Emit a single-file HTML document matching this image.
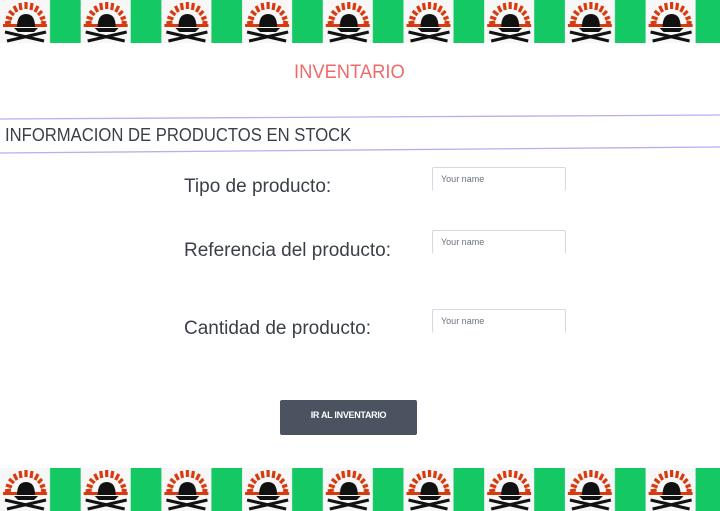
<!DOCTYPE html>
<html><head><meta charset="utf-8">
<style>
body{margin:0;width:720px;height:511px;background:#fff;position:relative;overflow:hidden;font-family:"Liberation Sans",sans-serif;}
.band{position:absolute;left:0;width:720px;height:43px}
.t{position:absolute;white-space:nowrap}
.lbl{font-size:19px;color:#3a3f48;left:184px}
.inp{position:absolute;left:432px;width:134px;height:24px;border:1px solid #d6d9e0;border-bottom:none;border-radius:2px;font-size:9px;color:#6b7280;box-sizing:border-box;padding:6px 0 0 8px}
</style></head><body>
<svg width="0" height="0" style="position:absolute">
<defs>
<pattern id="p" x="0" y="0" width="80.7" height="43" patternUnits="userSpaceOnUse">
<rect width="50" height="43" fill="#f7f7f7"/>
<rect x="50" width="30.7" height="43" fill="#14c964"/>
<g stroke="#d63a0e" stroke-width="3.2">
<line x1="5" y1="23" x2="11" y2="22"/><line x1="6" y1="17" x2="12" y2="19"/>
<line x1="9" y1="11" x2="14" y2="15"/><line x1="14" y1="6" x2="17" y2="12"/>
<line x1="20" y1="3" x2="21" y2="10"/><line x1="26" y1="2" x2="26" y2="9"/>
<line x1="32" y1="3" x2="31" y2="10"/><line x1="38" y1="6" x2="35" y2="12"/>
<line x1="42" y1="11" x2="38" y2="15"/><line x1="45" y1="17" x2="40" y2="19"/>
<line x1="46" y1="23" x2="41" y2="22"/>
</g>
<rect x="3" y="24" width="44" height="3" fill="#d63a0e"/>
<path d="M17 27 Q17 14 26 14 Q35 14 35 27 Z" fill="#111"/>
<path d="M14 28 L38 28 L34 32 L18 32 Z" fill="#111"/>
<g stroke="#111" stroke-width="3">
<line x1="5" y1="32" x2="44" y2="41"/><line x1="46" y1="32" x2="7" y2="41"/>
</g>
</pattern>
</defs></svg>
<svg class="band" style="top:0"><rect width="720" height="43" fill="url(#p)"/></svg>
<svg class="band" style="top:468"><rect width="720" height="43" fill="url(#p)"/></svg>
<div class="t" style="left:294px;top:62px;font-size:19px;color:#f06a6a;transform:scaleX(0.965);transform-origin:0 0">INVENTARIO</div>
<svg style="position:absolute;left:0;top:110px" width="720" height="45">
<line x1="0" y1="9" x2="720" y2="5" stroke="#b9aef0" stroke-width="1.3"/>
<line x1="0" y1="43" x2="720" y2="37" stroke="#b9aef0" stroke-width="1.3"/>
</svg>
<div class="t" style="left:5px;top:125px;font-size:18px;color:#3a3f48;transform:scaleX(0.925);transform-origin:0 0">INFORMACION DE PRODUCTOS EN STOCK</div>
<div class="t lbl" style="top:176px">Tipo de producto:</div>
<div class="t lbl" style="top:240px">Referencia del producto:</div>
<div class="t lbl" style="top:318px">Cantidad de producto:</div>
<div class="inp" style="top:167px">Your name</div>
<div class="inp" style="top:230px">Your name</div>
<div class="inp" style="top:309px">Your name</div>
<div style="position:absolute;left:280px;top:400px;width:137px;height:35px;background:#4a535f;border-radius:2px;color:#fff;font-size:9px;font-weight:bold;text-align:center;line-height:30px;letter-spacing:-0.3px">IR AL INVENTARIO</div>
</body></html>
